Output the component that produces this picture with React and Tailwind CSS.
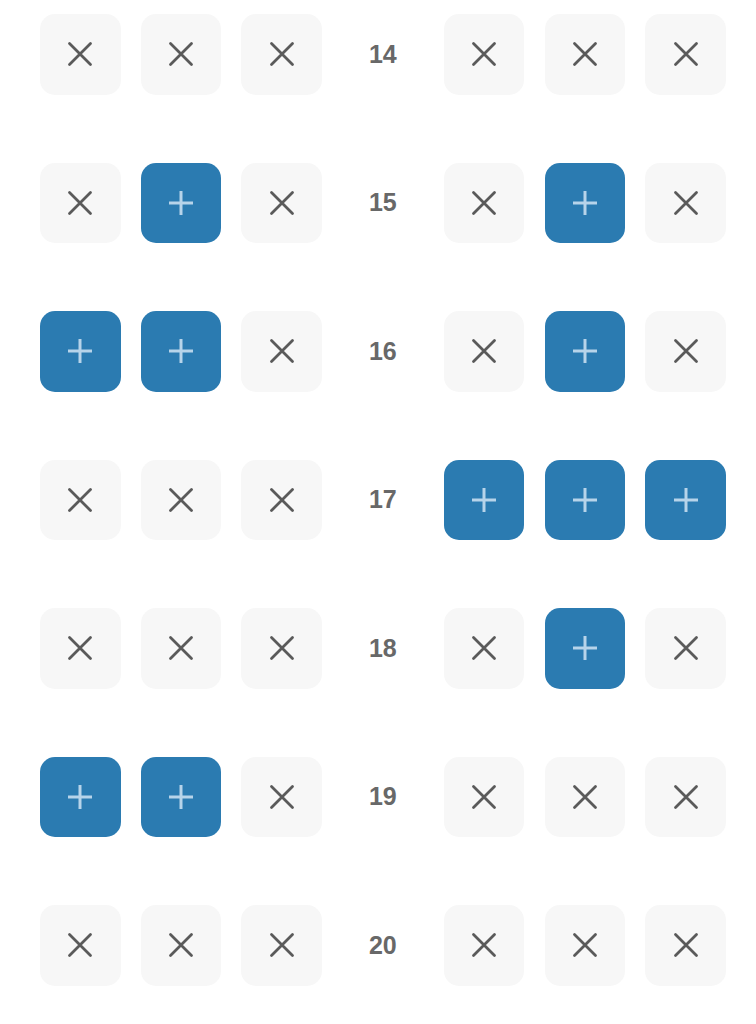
import React from 'react';

// row number -> [left three, right three], true = selected
const ROWS = [
  [14, [false, false, false], [false, false, false]],
  [15, [false, true, false], [false, true, false]],
  [16, [true, true, false], [false, true, false]],
  [17, [false, false, false], [true, true, true]],
  [18, [false, false, false], [false, true, false]],
  [19, [true, true, false], [false, false, false]],
  [20, [false, false, false], [false, false, false]],
];

const Cross = () => (
  <svg width="26" height="26" viewBox="0 0 26 26" fill="none" stroke="#5a5a5a" strokeWidth="2.8" strokeLinecap="round">
    <path d="M2.5 2.5 L23.5 23.5 M23.5 2.5 L2.5 23.5" />
  </svg>
);

const Plus = () => (
  <svg width="26" height="26" viewBox="0 0 26 26" fill="none" stroke="#b7d4ea" strokeWidth="3">
    <path d="M13 1 V25 M1 13 H25" />
  </svg>
);

function Tile({ on }) {
  return (
    <div
      className={
        'w-[80.5px] h-[80.5px] rounded-[15px] flex items-center justify-center ' +
        (on ? 'bg-[#2b7bb1]' : 'bg-[#f7f7f7]')
      }
    >
      {on ? <Plus /> : <Cross />}
    </div>
  );
}

export default function App() {
  return (
    <div className="bg-white w-[756px] h-[1024px] overflow-hidden pt-[14px] pl-[40px]">
      <div className="flex flex-col gap-y-[68px]">
        {ROWS.map(([n, left, right]) => (
          <div key={n} className="flex items-center">
            <div className="flex gap-[20.2px]">
              {left.map((on, i) => <Tile key={i} on={on} />)}
            </div>
            <div
              className="w-[122px] text-center text-[25px] font-bold text-[#686868]"
              style={{ fontFamily: '"Liberation Sans", Arial, sans-serif' }}
            >
              {n}
            </div>
            <div className="flex gap-[20.2px]">
              {right.map((on, i) => <Tile key={i} on={on} />)}
            </div>
          </div>
        ))}
      </div>
    </div>
  );
}
